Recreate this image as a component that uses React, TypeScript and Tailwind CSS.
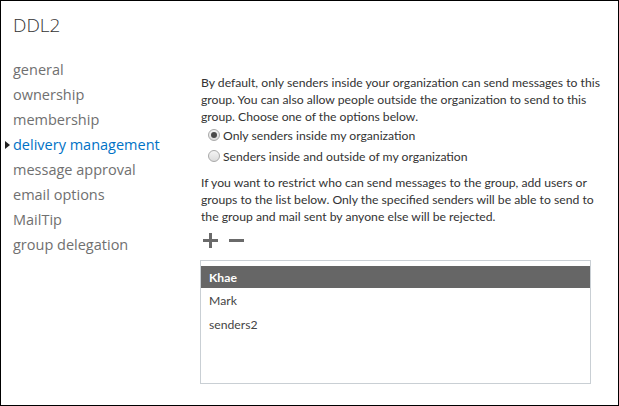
import React from "react";

const navItems = [
  "general",
  "ownership",
  "membership",
  "delivery management",
  "message approval",
  "email options",
  "MailTip",
  "group delegation",
];

const senders = ["Khae", "Mark", "senders2"];

const bodyFont = { fontFamily: 'Lato, "Open Sans", sans-serif' };

function Radio({ checked }: { checked?: boolean }) {
  return (
    <span className="relative inline-flex h-[12px] w-[12px] shrink-0 items-center justify-center rounded-full border border-[#a9a9a9] bg-gradient-to-b from-[#f4f4f4] to-[#dcdcdc]">
      {checked && <span className="h-[6px] w-[6px] rounded-full bg-[#4a4a4a]" />}
    </span>
  );
}

export default function App() {
  return (
    <div
      className="flex h-[406px] w-[619px] flex-col border border-black bg-white text-[#333]"
      style={{ fontFamily: '"Open Sans", "Noto Sans", sans-serif' }}
    >
      <h1 className="ml-[12px] mt-[11px] text-[19px] font-light leading-[26px] text-[#333]">DDL2</h1>
      <div className="mt-[19px] flex">
        <nav className="flex w-[199px] shrink-0 flex-col">
          {navItems.map((item) => {
            const active = item === "delivery management";
            return (
              <div key={item} className="flex h-[25px] items-center">
                <span className="flex w-[12px] justify-center">
                  {active && (
                    <svg width="5" height="8" viewBox="0 0 5 8">
                      <path d="M0 0 L5 4 L0 8 Z" fill="#222" />
                    </svg>
                  )}
                </span>
                <span
                  className={`text-[14.5px] leading-[25px] ${active ? "text-[#0072c6]" : "text-[#707070]"}`}
                >
                  {item}
                </span>
              </div>
            );
          })}
        </nav>
        <div
          className="mt-[17px] flex flex-1 flex-col whitespace-nowrap pl-[1px] text-[12.2px] leading-[17px]"
          style={bodyFont}
        >
          <p>
            By default, only senders inside your organization can send messages to this
            <br />
            group. You can also allow people outside the organization to send to this
            <br />
            group. Choose one of the options below.
          </p>
          <label className="flex h-[20px] items-center gap-[3px] pl-[7px]">
            <Radio checked />
            <span>Only senders inside my organization</span>
          </label>
          <label className="flex h-[22px] items-center gap-[3px] pl-[7px]">
            <Radio />
            <span>Senders inside and outside of my organization</span>
          </label>
          <p className="mt-[7px]">
            If you want to restrict who can send messages to the group, add users or
            <br />
            groups to the list below. Only the specified senders will be able to send to
            <br />
            the group and mail sent by anyone else will be rejected.
          </p>
          <div className="mt-[6px] flex h-[18px] items-center gap-[11px] pl-[2px]">
            <svg width="15" height="15" viewBox="0 0 15 15">
              <rect x="6" y="0" width="3" height="15" fill="#6a6a6a" />
              <rect x="0" y="6" width="15" height="3" fill="#6a6a6a" />
            </svg>
            <svg width="15" height="15" viewBox="0 0 15 15">
              <rect x="0" y="6" width="15" height="3" fill="#6a6a6a" />
            </svg>
          </div>
          <div className="ml-[-1px] mt-[11px] h-[124px] w-[391px] border border-[#c9cfd4] pt-[5px]">
            {senders.map((s, i) => (
              <div
                key={s}
                className={`flex items-center px-[8px] text-[12.2px] ${i === 0 ? "h-[22px] bg-[#666] font-bold text-white" : "h-[24px] text-[#444]"}`}
              >
                {s}
              </div>
            ))}
          </div>
        </div>
      </div>
    </div>
  );
}
